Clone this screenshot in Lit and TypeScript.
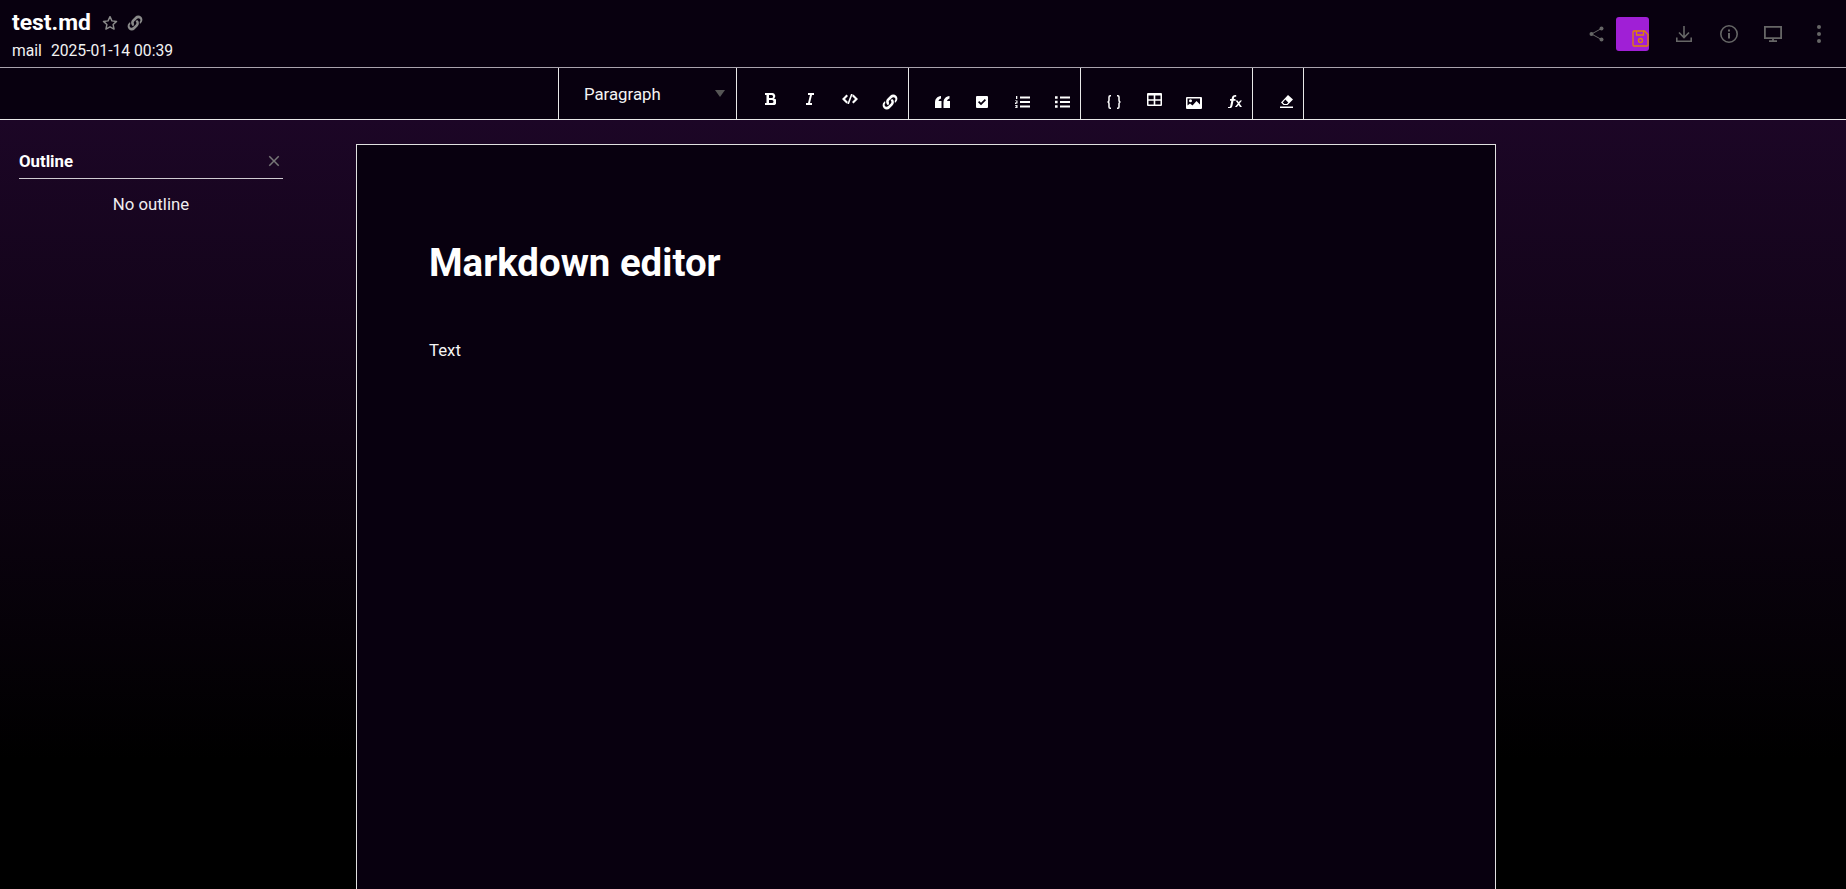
import { LitElement, html, css, svg } from "lit";
import { customElement } from "lit/decorators.js";

type Glyph = { w: number; h: number; top: number; d: string; vb?: number; stroke?: number };

const draw = (g: Glyph) => {
  const box = g.vb ? `0 0 ${g.vb} ${g.vb}` : `0 0 ${g.w} ${g.h}`;
  return html`<svg
    width=${g.w}
    height=${g.h}
    viewBox=${box}
    fill=${g.stroke ? "none" : "currentColor"}
    stroke=${g.stroke ? "currentColor" : "none"}
    stroke-width=${g.stroke ?? 0}
    fill-rule="evenodd"
    style="margin-top:${g.top}px"
  >${svg`<path d=${g.d}></path>`}</svg>`;
};

const chain24 =
  "M10.600 13.400a1.300 1.300 0 0 1-1.800 1.800 5 5 0 0 1 0-7.100l3.500-3.500a5 5 0 0 1 7.100 7.100l-1.500 1.500a7 7 0 0 0-.4-2.400l.5-.5a2.500 2.500 0 0 0-3.500-3.500l-3.500 3.500a2.500 2.500 0 0 0 0 3.100zM13.400 9.600a1.300 1.300 0 0 1 1.800-.8 5 5 0 0 1 0 7.100l-3.500 3.500a5 5 0 0 1-7.100-7.100l1.500-1.500a7 7 0 0 0 .4 2.400l-.5.500a2.500 2.500 0 0 0 3.500 3.500l3.500-3.500a2.500 2.500 0 0 0 0-3.500 1.300 1.300 0 0 1 .4-1.600z";

// top = distance below the toolbar's top edge (y 68)
const tools: Glyph[][] = [
  [
    { w: 11, h: 12, top: 25, d: "M0 0h7a3 3 0 0 1 2 5.400A3.300 3.300 0 0 1 7.500 12H0v-2h1.500V2H0zM4 2v3h2.600a1.500 1.500 0 0 0 0-3zM4 7v3h3a1.500 1.500 0 0 0 0-3z" },
    { w: 8, h: 12, top: 25, d: "M2 0h6v2H6L4 10h2v2H0v-2h2L4 2H2z" },
    { w: 16, h: 10, top: 26, d: "M4.500.5 6 2 3 5l3 3-1.500 1.500L0 5zM11.500.5 10 2l3 3-3 3 1.500 1.500L16 5zM9 0h1.700L7 10H5.300z" },
    { w: 20, h: 20, top: 24, vb: 24, d: chain24 },
  ],
  [
    { w: 15, h: 12, top: 28, d: "M0 12V6.500C0 3 2 .5 6 0v2.500C4.500 3 3.800 3.800 3.500 5h3v7zM8.500 12V6.500C8.500 3 10.500.5 14.500 0v2.500C13 3 12.300 3.800 12 5h3v7z" },
    { w: 12, h: 12, top: 28, d: "M1 0h10a1 1 0 0 1 1 1v10a1 1 0 0 1-1 1H1a1 1 0 0 1-1-1V1a1 1 0 0 1 1-1zM5 9.200l5-5L8.800 3 5 6.800 3.200 5 2 6.200z" },
    { w: 15, h: 12, top: 28, d: "M5 .6h10v1.800H5zM5 5.100h10v1.800H5zM5 9.600h10v1.800H5zM1 0h1.300v3H1zM0 4.500h2.500V7H1.200v.5h1.300v.5H0V6.500h1.300V5H0zM0 9h2.500v3H0v-.7h1.300v-.5H.6v-.6h.7v-.5H0z" },
    { w: 15, h: 12, top: 28, d: "M5 .6h10v1.800H5zM5 5.100h10v1.800H5zM5 9.600h10v1.800H5zM0 .2h2.600v2.600H0zM0 4.700h2.600v2.600H0zM0 9.200h2.600v2.600H0z" },
  ],
  [
    { w: 14, h: 14, top: 27, stroke: 1.5, d: "M4 .75H3.200C2.300.75 2 1.300 2 2v3C2 6 1.500 7 .5 7 1.500 7 2 8 2 9v3c0 .7.3 1.250 1.200 1.250H4M10 .75h.8c.9 0 1.200.55 1.200 1.250v3c0 1 .5 2 1.500 2-1 0-1.500 1-1.500 2v3c0 .7-.3 1.250-1.200 1.250H10" },
    { w: 15, h: 13, top: 25, d: "M1 0h13a1 1 0 0 1 1 1v11a1 1 0 0 1-1 1H1a1 1 0 0 1-1-1V1a1 1 0 0 1 1-1zM1.500 2.500v3.800h5.200V2.500zM8.300 2.500v3.800h5.200V2.500zM1.500 7.800v3.700h5.200V7.800zM8.300 7.800v3.700h5.200V7.800z" },
    { w: 16, h: 12, top: 29, d: "M1 0h14a1 1 0 0 1 1 1v10a1 1 0 0 1-1 1H1a1 1 0 0 1-1-1V1a1 1 0 0 1 1-1zM1.500 1.500v7l2.500-2 2.500 2 4-4.500 3.500 3.500v-6zM4.500 2.200a1.500 1.500 0 1 0 0 3 1.500 1.500 0 0 0 0-3z" },
    { w: 15, h: 13, top: 27, d: "M8.500 0C6.300 0 5.200 1 4.800 3l-.2 1H3v1.700h1.300L3.300 10.800c-.2.8-.5 1.200-1.200 1.200H1v1h1.700c1.700 0 2.500-1 2.800-2.600l1-4.700h2V4H6.800l.2-1c.1-.7.4-1.300 1.200-1.300h1V0zM8.500 5.500h2.100l1.100 1.700 1.400-1.700H15l-2.400 2.900 2.400 3.600h-2.100l-1.300-2-1.700 2H7.900l2.900-3.500z" },
  ],
  [
    { w: 13, h: 13, top: 27, d: "M0 11.500h13V13H0zM8 0l5 4.500L7.500 10h-4L1 7.500zM2.800 7.500 4.300 9h2.500l1.500-1.500-3-3z" },
  ],
];

const share = svg`<circle cx="2.500" cy="8" r="2"></circle><circle cx="12.500" cy="2.500" r="2"></circle><circle cx="12.500" cy="13.500" r="2"></circle><path d="M2.500 8 12.500 2.500M2.500 8l10 5.500" fill="none" stroke="currentColor" stroke-width="1"></path>`;

@customElement("app-root")
export class AppRoot extends LitElement {
  static styles = css`
    :host { display: block; height: 889px; overflow: hidden; font-family: Roboto, sans-serif; color: #fff; background: #08000f; }
    .header { height: 68px; box-sizing: border-box; border-bottom: 1px solid #a9a3ad; display: flex; justify-content: space-between; align-items: flex-start; padding: 0 25px 0 12px; background: #08000f; }
    .meta { padding-top: 9px; }
    .title { display: flex; align-items: center; height: 27px; }
    .title b { font-size: 22.9px; font-weight: 700; line-height: 27px; }
    .star { color: #8a8a8a; margin-left: 11px; display: flex; }
    .chain { color: #8a8a8a; margin-left: 7px; display: flex; }
    .sub { font-size: 15.7px; line-height: 18px; margin-top: 6px; color: #f2f2f2; display: flex; gap: 9px; }
    .actions { display: flex; align-items: center; height: 67px; color: #666; }
    .actions svg { display: block; flex: none; }
    .save { width: 33px; height: 34px; margin: 0 27px 0 12px; background: #a01fd6; border-radius: 3px; box-sizing: border-box; padding: 13px 0 0 16px; color: #e28500; }
    .dl { margin-right: 28px; }
    .info { margin-right: 26px; }
    .mon { margin-right: 35px; }
    .toolbar { height: 52px; box-sizing: border-box; border-bottom: 1px solid #e8e8e8; display: flex; justify-content: center; background: #08000f; padding-left: 16px; }
    .select { width: 179px; flex: none; box-sizing: border-box; border-left: 1px solid #e8e8e8; border-right: 1px solid #e8e8e8; display: flex; justify-content: space-between; padding: 16px 11px 0 25px; font-size: 16.8px; line-height: 20px; color: #f4f4f4; }
    .arrow { width: 0; height: 0; margin-top: 6px; border: 5px solid transparent; border-top: 7px solid #555; border-bottom: 0; }
    .group { display: flex; flex: none; width: 172px; box-sizing: border-box; border-right: 1px solid #e8e8e8; padding-left: 13px; }
    .group.last { width: 51px; padding-left: 27px; }
    .btn { flex: 0 0 40px; display: flex; justify-content: center; align-items: flex-start; }
    .last .btn { flex: none; }
    .btn svg { display: block; }
    .main { height: 769px; overflow: hidden; display: flex; background: linear-gradient(#1c0626, #000 83%); }
    .side { width: 356px; flex: none; padding: 31px 0 0 19px; box-sizing: border-box; }
    .side-head { width: 264px; height: 28px; box-sizing: border-box; border-bottom: 1px solid #cfcbd1; display: flex; justify-content: space-between; font-size: 16.8px; font-weight: 700; line-height: 20px; }
    .side-head svg { color: #777; margin: 1px 0 0; }
    .empty { width: 264px; text-align: center; font-size: 16.8px; line-height: 20px; margin-top: 15px; color: #f0eef0; }
    .paper { width: 1140px; height: 800px; flex: none; margin-top: 24px; box-sizing: border-box; border: 1px solid #e0e0e0; background: #08000f; padding: 95px 72px 0; }
    h1 { margin: 0 0 53px; font-size: 38.4px; line-height: 45px; font-weight: 700; }
    p { margin: 0; font-size: 16.8px; line-height: 24px; color: #f4f4f4; }
  `;

  render() {
    return html`
      <div class="header">
        <div class="meta">
          <div class="title"><b>test.md</b>
            <span class="star"><svg width="16" height="16" viewBox="0 0 24 24" fill="none" stroke="currentColor" stroke-width="2.200" stroke-linejoin="round">${svg`<path d="M12 2.500l2.900 6.300 6.900.8-5.100 4.700 1.400 6.800-6.100-3.400-6.100 3.400 1.400-6.800-5.100-4.700 6.900-.8z"></path>`}</svg></span>
            <span class="chain">${draw({ w: 20, h: 20, top: 0, vb: 24, d: chain24 })}</span>
          </div>
          <div class="sub"><span>mail</span><span>2025-01-14 00:39</span></div>
        </div>
        <div class="actions">
          <svg width="15" height="16" viewBox="0 0 15 16" fill="currentColor">${share}</svg>
          <div class="save"><svg width="17" height="17" viewBox="0 0 17 17" fill="none" stroke="currentColor" stroke-width="1.300">${svg`<path d="M1 2a1 1 0 0 1 1-1h10.500L16 4.500V15a1 1 0 0 1-1 1H2a1 1 0 0 1-1-1zM4.500 1v4h7V1"></path><circle cx="8.500" cy="10.500" r="2"></circle>`}</svg></div>
          <svg class="dl" width="16" height="16" viewBox="0 0 16 16" fill="none" stroke="currentColor" stroke-width="1.600">${svg`<path d="M8 0v11M3 6.500l5 5 5-5M.8 11.500v3.700h14.400v-3.700"></path>`}</svg>
          <svg class="info" width="18" height="18" viewBox="0 0 18 18" fill="none" stroke="currentColor" stroke-width="1.600">${svg`<circle cx="9" cy="9" r="8.200"></circle><path d="M9 8v5.500M9 4.500v2" stroke-width="2"></path>`}</svg>
          <svg class="mon" width="18" height="16" viewBox="0 0 18 16" fill="none" stroke="currentColor" stroke-width="1.800">${svg`<path d="M.9.900h16.200v11.200H.9zM9 12v3M5 15.200h8"></path>`}</svg>
          <svg width="4" height="18" viewBox="0 0 4 18" fill="currentColor">${svg`<circle cx="2" cy="2" r="2"></circle><circle cx="2" cy="9" r="2"></circle><circle cx="2" cy="16" r="2"></circle>`}</svg>
        </div>
      </div>
      <div class="toolbar">
        <div class="select"><span>Paragraph</span><span class="arrow"></span></div>
        ${tools.map((g, i) => html`<div class="group ${i === 3 ? "last" : ""}">${g.map((t) => html`<span class="btn">${draw(t)}</span>`)}</div>`)}
      </div>
      <div class="main">
        <div class="side">
          <div class="side-head"><span>Outline</span><svg width="18" height="18" viewBox="0 0 24 24" fill="currentColor">${svg`<path d="M19 6.400 17.600 5 12 10.600 6.400 5 5 6.400 10.600 12 5 17.600 6.400 19 12 13.400 17.600 19 19 17.600 13.400 12z"></path>`}</svg></div>
          <div class="empty">No outline</div>
        </div>
        <div class="paper">
          <h1>Markdown editor</h1>
          <p>Text</p>
        </div>
      </div>
    `;
  }
}
